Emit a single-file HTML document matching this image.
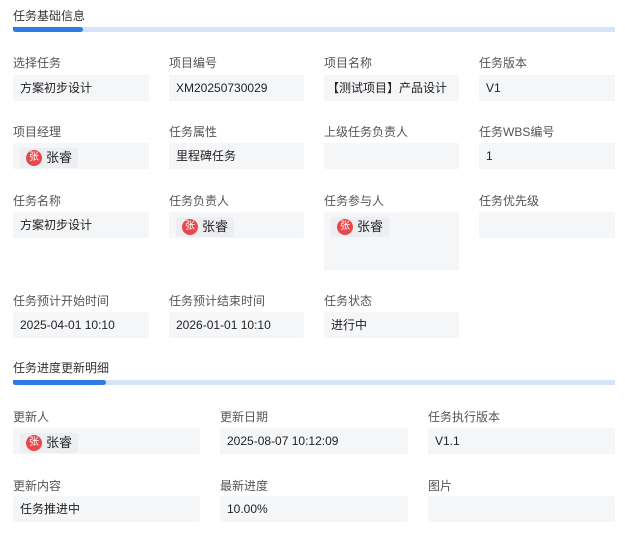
<!DOCTYPE html>
<html><head><meta charset="utf-8"><style>
*{margin:0;padding:0;box-sizing:border-box}
body{width:625px;height:538px;background:#fff;font-family:"Liberation Sans","Noto Sans CJK SC",sans-serif;font-size:12px;position:relative;overflow:hidden}
.a{position:absolute}
.t{font-size:12px;color:#333}
.l{font-size:12px;color:#555}
.b{background:#f5f6f8;border-radius:2px;color:#222;padding:0 7px;line-height:26px;height:26px}
.bar{height:5px;background:#d6e4fa}
.bar i{display:block;height:5px;background:#2f7be6;border-radius:0 4px 4px 4px}
.chip{display:inline-flex;align-items:center;background:#eceef2;border-radius:3px;height:20px;margin-top:3px;padding:0 6px 0 6px;line-height:20px;font-size:13px}
.av{width:16px;height:16px;border-radius:50%;background:#e8484b;color:#fff;font-size:10px;line-height:16px;text-align:center;margin:0 4px 0 0}
</style></head><body>
<div class="a t" style="left:13px;top:7px">任务基础信息</div>
<div class="a bar" style="left:13px;top:27px;width:602px"><i style="width:70px"></i></div>

<div class="a l" style="left:13px;top:54px">选择任务</div>
<div class="a l" style="left:169px;top:54px">项目编号</div>
<div class="a l" style="left:324px;top:54px">项目名称</div>
<div class="a l" style="left:479px;top:54px">任务版本</div>
<div class="a b" style="left:13px;top:75px;width:136px">方案初步设计</div>
<div class="a b" style="left:169px;top:75px;width:135px">XM20250730029</div>
<div class="a b" style="left:324px;top:75px;width:135px;padding-left:3px">【测试项目】产品设计</div>
<div class="a b" style="left:479px;top:75px;width:136px">V1</div>

<div class="a l" style="left:13px;top:123px">项目经理</div>
<div class="a l" style="left:169px;top:123px">任务属性</div>
<div class="a l" style="left:324px;top:123px">上级任务负责人</div>
<div class="a l" style="left:479px;top:123px">任务WBS编号</div>
<div class="a b" style="left:13px;top:143px;width:136px"><span class="chip"><span class="av">张</span>张睿</span></div>
<div class="a b" style="left:169px;top:143px;width:135px">里程碑任务</div>
<div class="a b" style="left:324px;top:143px;width:135px"></div>
<div class="a b" style="left:479px;top:143px;width:136px">1</div>

<div class="a l" style="left:13px;top:192px">任务名称</div>
<div class="a l" style="left:169px;top:192px">任务负责人</div>
<div class="a l" style="left:324px;top:192px">任务参与人</div>
<div class="a l" style="left:479px;top:192px">任务优先级</div>
<div class="a b" style="left:13px;top:212px;width:136px">方案初步设计</div>
<div class="a b" style="left:169px;top:212px;width:135px"><span class="chip"><span class="av">张</span>张睿</span></div>
<div class="a b" style="left:324px;top:212px;width:135px;height:58px"><span class="chip"><span class="av">张</span>张睿</span></div>
<div class="a b" style="left:479px;top:212px;width:136px"></div>

<div class="a l" style="left:13px;top:292px">任务预计开始时间</div>
<div class="a l" style="left:169px;top:292px">任务预计结束时间</div>
<div class="a l" style="left:324px;top:292px">任务状态</div>
<div class="a b" style="left:13px;top:312px;width:136px">2025-04-01 10:10</div>
<div class="a b" style="left:169px;top:312px;width:135px">2026-01-01 10:10</div>
<div class="a b" style="left:324px;top:312px;width:135px">进行中</div>

<div class="a t" style="left:13px;top:359px">任务进度更新明细</div>
<div class="a bar" style="left:13px;top:380px;width:602px"><i style="width:93px"></i></div>

<div class="a l" style="left:13px;top:408px">更新人</div>
<div class="a l" style="left:220px;top:408px">更新日期</div>
<div class="a l" style="left:428px;top:408px">任务执行版本</div>
<div class="a b" style="left:13px;top:428px;width:187px"><span class="chip"><span class="av">张</span>张睿</span></div>
<div class="a b" style="left:220px;top:428px;width:188px">2025-08-07 10:12:09</div>
<div class="a b" style="left:428px;top:428px;width:187px">V1.1</div>

<div class="a l" style="left:13px;top:477px">更新内容</div>
<div class="a l" style="left:220px;top:477px">最新进度</div>
<div class="a l" style="left:428px;top:477px">图片</div>
<div class="a b" style="left:13px;top:496px;width:187px">任务推进中</div>
<div class="a b" style="left:220px;top:496px;width:188px">10.00%</div>
<div class="a b" style="left:428px;top:496px;width:187px"></div>
</body></html>
